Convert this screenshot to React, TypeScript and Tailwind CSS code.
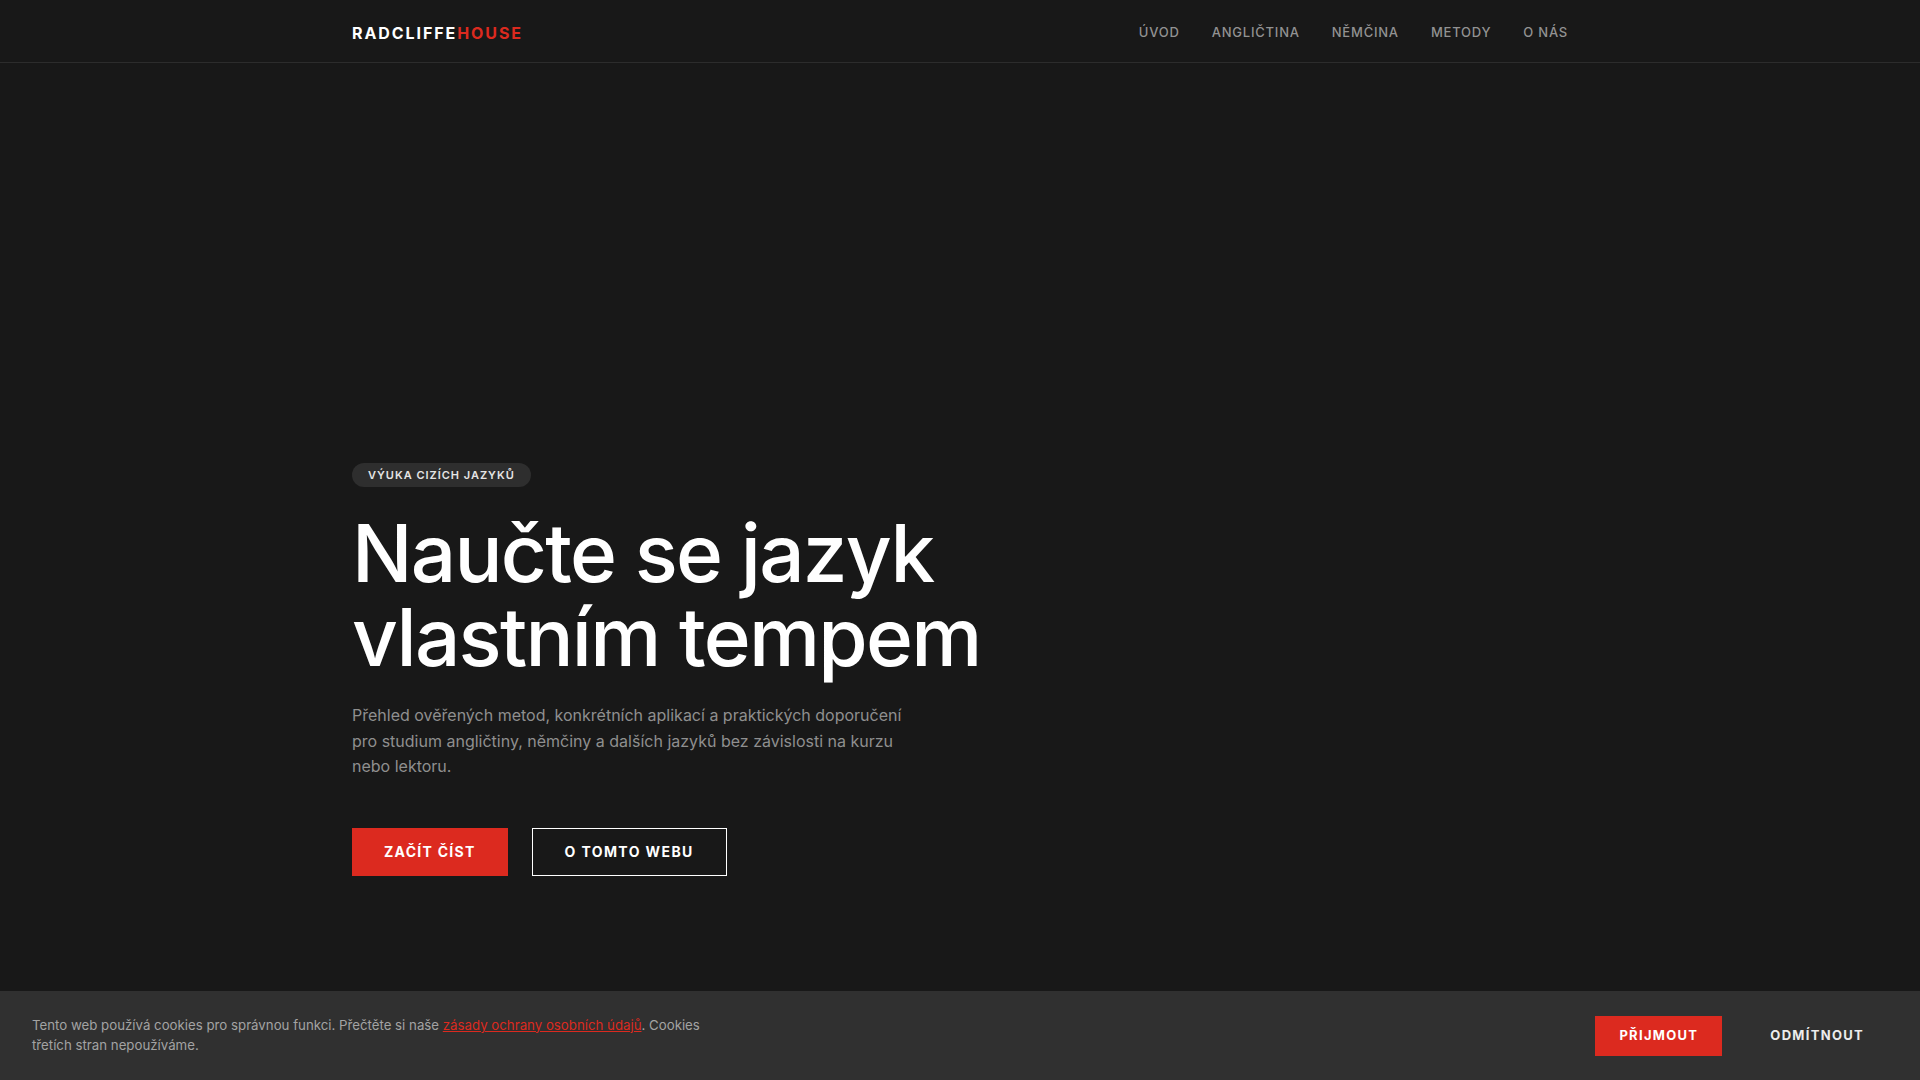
import { useState } from "react";

const navLinks = ["Úvod", "Angličtina", "Němčina", "Metody", "O nás"];

function Header() {
  return (
    <header className="border-b border-[#2c2c2c]">
      <div className="mx-auto flex h-[62px] max-w-7xl items-center justify-between px-8 pt-[3px]">
        <a href="#" className="text-[16px] font-bold tracking-[0.12em] text-white">
          RADCLIFFE<span className="text-[#dc2a1f]">HOUSE</span>
        </a>
        <nav className="flex items-center gap-8">
          {navLinks.map((l) => (
            <a
              key={l}
              href="#"
              className="text-[13px] font-medium uppercase tracking-[0.06em] text-[#929292] hover:text-white"
            >
              {l}
            </a>
          ))}
        </nav>
      </div>
    </header>
  );
}

function CookieBar({ onClose }: { onClose: () => void }) {
  return (
    <div className="fixed inset-x-0 bottom-0 flex h-[89px] items-center justify-between bg-[#303030] px-8">
      <p className="max-w-2xl text-[13.25px] leading-[1.5] text-[#a3a3a3]">
        Tento web používá cookies pro správnou funkci. Přečtěte si naše{" "}
        <a href="#" className="text-[#dc2a1f] underline">
          zásady ochrany osobních údajů
        </a>
        . Cookies třetích stran nepoužíváme.
      </p>
      <div className="flex items-center gap-6">
        <button
          onClick={onClose}
          className="h-10 bg-[#dc2a1f] px-6 text-[13px] font-bold uppercase tracking-[0.1em] text-white"
        >
          Přijmout
        </button>
        <button
          onClick={onClose}
          className="h-10 px-6 text-[13px] font-bold uppercase tracking-[0.1em] text-[#ececec]"
        >
          Odmítnout
        </button>
      </div>
    </div>
  );
}

export default function App() {
  const [cookies, setCookies] = useState(true);

  return (
    <div className="min-h-screen bg-[#181818] font-['Inter',sans-serif] text-white">
      <Header />
      <main className="mx-auto max-w-7xl px-8 pb-48 pt-[400px]">
        <div className="flex h-6 w-fit items-center rounded-full bg-[#2e2e2e] px-4 text-[11px] font-semibold uppercase tracking-[0.09em] text-[#e5e5e5]">
          Výuka cizích jazyků
        </div>
        <h1 className="mt-6 text-[80px] font-medium leading-[1.05] tracking-[-0.022em] text-white">
          Naučte se jazyk
          <br />
          vlastním tempem
        </h1>
        <p className="mt-6 max-w-xl text-[16px] leading-[1.6] text-[#8f8f8f]">
          Přehled ověřených metod, konkrétních aplikací a praktických doporučení pro studium
          angličtiny, němčiny a dalších jazyků bez závislosti na kurzu nebo lektoru.
        </p>
        <div className="mt-12 flex items-center gap-6">
          <a
            href="#"
            className="flex h-12 items-center bg-[#dc2a1f] px-8 text-[14px] font-bold uppercase tracking-[0.09em] text-white"
          >
            Začít číst
          </a>
          <a
            href="#"
            className="flex h-12 items-center border border-white px-8 text-[14px] font-bold uppercase tracking-[0.1em] text-white"
          >
            O tomto webu
          </a>
        </div>
      </main>
      {cookies && <CookieBar onClose={() => setCookies(false)} />}
    </div>
  );
}
